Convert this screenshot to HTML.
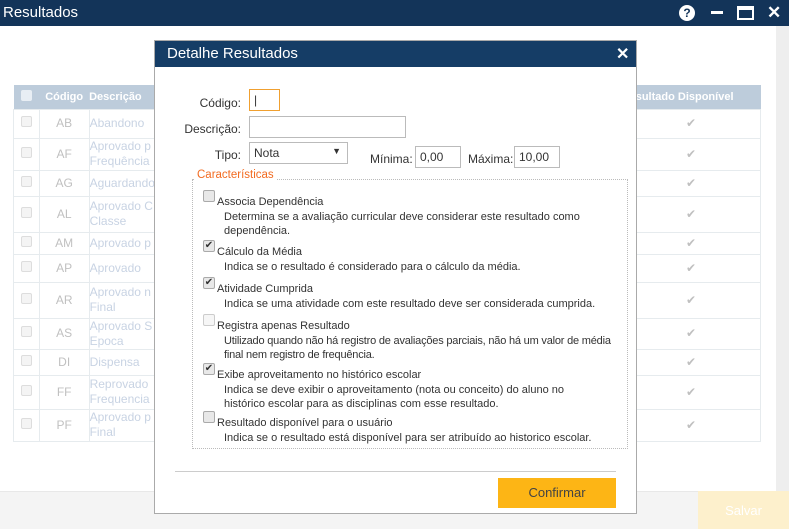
<!DOCTYPE html><html><head><meta charset="utf-8"><style>
*{box-sizing:border-box;margin:0;padding:0}
body{width:789px;height:529px;position:relative;overflow:hidden;background:#fff;font-family:"Liberation Sans",sans-serif;font-size:12px;color:#333}
.top{position:absolute;left:0;top:0;width:789px;height:26px;background:#133459;color:#fff;font-size:15px;padding:4px 0 0 3px}
.ic{position:absolute;color:#fff;font-weight:bold}
table{position:absolute;left:13px;top:85px;width:748px;border-collapse:collapse;color:#c5cfdb}
th{background:#bdccdb;color:#fff;height:24px;text-align:left;font-size:11px;font-weight:bold;white-space:nowrap}
td{border:1px solid #e6ebee;font-size:12px;line-height:15px;color:#c8d3e3;vertical-align:middle;white-space:nowrap}
td.c{text-align:center;color:#c0c0c0}
.cb{display:inline-block;width:11px;height:11px;border:1px solid #ddd;border-radius:2px;background:#f4f4f4}
.footer{position:absolute;left:0;top:491px;width:789px;height:38px;background:#f4f4f4;border-top:1px solid #e8e8e8}
.salvar{position:absolute;left:698px;top:491px;width:91px;height:38px;background:#fdf0cc;color:#fff;font-size:13px;text-align:center;line-height:40px}
.scroll{position:absolute;left:776px;top:26px;width:13px;height:465px;background:#eee}
.modal{position:absolute;left:154px;top:40px;width:483px;height:474px;background:#fff;border:1px solid #aaa}
.mh{height:26px;background:#153d66;color:#fff;font-size:15px;padding:4px 0 0 12px}
.lbl{position:absolute;font-size:12px;color:#333;white-space:nowrap}
.r{left:0;width:86px;text-align:right}
.inp{position:absolute;border:1px solid #bbb;height:22px;background:#fff;font-size:12px;padding:3px 4px}
.fs{position:absolute;left:37px;top:138px;width:436px;height:270px;border:1px dotted #bbb}
.leg{position:absolute;left:39px;top:128px;background:#fff;color:#f26b21;font-size:11.5px;padding:0 3px}
.item{position:absolute;left:49px;font-size:11px;color:#333;line-height:14.5px;white-space:nowrap}
.item .d{padding-left:20px}
.item .t{padding-left:13px}
.mcb{position:absolute;left:-1px;top:-5px;width:12px;height:12px;border:1px solid #aaa;border-radius:2px;background:#e8e8e8;font-size:10px;line-height:10px;color:#333;text-align:center}
</style></head><body>
<div class="top">Resultados</div>
<div class="ic" style="left:679px;top:5px;width:16px;height:16px;border-radius:50%;background:#fff;color:#133459;font-size:12px;text-align:center;line-height:16px">?</div>
<div style="position:absolute;left:711px;top:11px;width:12px;height:3px;background:#fff"></div>
<div style="position:absolute;left:737px;top:6px;width:17px;height:14px;border:2px solid #fff;border-top-width:4px"></div>
<div class="ic" style="left:767px;top:3px;font-size:17px">✕</div>
<div class="scroll"></div>
<table>
<tr><th style="width:26px;text-align:center"><span class="cb" style="background:#e8eef4;border-color:#e8eef4"></span></th><th style="width:50px;text-align:center">Código</th><th style="width:540px">Descrição</th><th style="text-align:right;padding-right:27px">Resultado Disponível</th></tr>
<tr style="height:29px"><td class="c"><span class="cb"></span></td><td class="c">AB</td><td>Abandono</td><td class="c">✔</td></tr>
<tr style="height:32px"><td class="c"><span class="cb"></span></td><td class="c">AF</td><td>Aprovado p<br>Frequência</td><td class="c">✔</td></tr>
<tr style="height:26px"><td class="c"><span class="cb"></span></td><td class="c">AG</td><td>Aguardando</td><td class="c">✔</td></tr>
<tr style="height:36px"><td class="c"><span class="cb"></span></td><td class="c">AL</td><td>Aprovado C<br>Classe</td><td class="c">✔</td></tr>
<tr style="height:22px"><td class="c"><span class="cb"></span></td><td class="c">AM</td><td>Aprovado p</td><td class="c">✔</td></tr>
<tr style="height:28px"><td class="c"><span class="cb"></span></td><td class="c">AP</td><td>Aprovado</td><td class="c">✔</td></tr>
<tr style="height:36px"><td class="c"><span class="cb"></span></td><td class="c">AR</td><td>Aprovado n<br>Final</td><td class="c">✔</td></tr>
<tr style="height:28px"><td class="c"><span class="cb"></span></td><td class="c">AS</td><td>Aprovado S<br>Epoca</td><td class="c">✔</td></tr>
<tr style="height:26px"><td class="c"><span class="cb"></span></td><td class="c">DI</td><td>Dispensa</td><td class="c">✔</td></tr>
<tr style="height:34px"><td class="c"><span class="cb"></span></td><td class="c">FF</td><td>Reprovado<br>Frequencia</td><td class="c">✔</td></tr>
<tr style="height:32px"><td class="c"><span class="cb"></span></td><td class="c">PF</td><td>Aprovado p<br>Final</td><td class="c">✔</td></tr>
</table>
<div class="footer"></div>
<div class="salvar">Salvar</div>
<div class="modal">
<div class="mh">Detalhe Resultados</div>
<div class="ic" style="left:461px;top:3px;font-size:16px">✕</div>
<div class="lbl r" style="top:55px">Código:</div>
<div class="inp" style="left:94px;top:48px;width:31px;border:1px solid #f0a030">|</div>
<div class="lbl r" style="top:81px">Descrição:</div>
<div class="inp" style="left:94px;top:75px;width:157px"></div>
<div class="lbl r" style="top:107px">Tipo:</div>
<div class="inp" style="left:94px;top:101px;width:99px">Nota<span style="position:absolute;right:6px;top:3px;font-size:9px">▼</span></div>
<div class="lbl" style="left:215px;top:111px">Mínima:</div>
<div class="inp" style="left:260px;top:105px;width:46px">0,00</div>
<div class="lbl" style="left:313px;top:111px">Máxima:</div>
<div class="inp" style="left:359px;top:105px;width:46px">10,00</div>
<div class="fs"></div>
<div class="leg">Características</div>
<div class="item" style="top:154px"><div class="mcb"></div><div class="t">Associa Dependência</div><div class="d">Determina se a avaliação curricular deve considerar este resultado como<br>dependência.</div></div>
<div class="item" style="top:204px"><div class="mcb">✔</div><div class="t">Cálculo da Média</div><div class="d">Indica se o resultado é considerado para o cálculo da média.</div></div>
<div class="item" style="top:241px"><div class="mcb">✔</div><div class="t">Atividade Cumprida</div><div class="d">Indica se uma atividade com este resultado deve ser considerada cumprida.</div></div>
<div class="item" style="top:278px"><div class="mcb" style="background:#f6f6f6;border-color:#ccc"></div><div class="t">Registra apenas Resultado</div><div class="d" style="letter-spacing:-0.2px">Utilizado quando não há registro de avaliações parciais, não há um valor de média<br>final nem registro de frequência.</div></div>
<div class="item" style="top:327px"><div class="mcb">✔</div><div class="t">Exibe aproveitamento no histórico escolar</div><div class="d">Indica se deve exibir o aproveitamento (nota ou conceito) do aluno no<br>histórico escolar para as disciplinas com esse resultado.</div></div>
<div class="item" style="top:375px"><div class="mcb"></div><div class="t">Resultado disponível para o usuário</div><div class="d">Indica se o resultado está disponível para ser atribuído ao historico escolar.</div></div>
<div style="position:absolute;left:20px;top:430px;width:441px;height:1px;background:#ccc"></div>
<div style="position:absolute;left:343px;top:437px;width:118px;height:30px;background:#fdb515;color:#444;font-size:13px;text-align:center;line-height:30px">Confirmar</div>
</div>
</body></html>
